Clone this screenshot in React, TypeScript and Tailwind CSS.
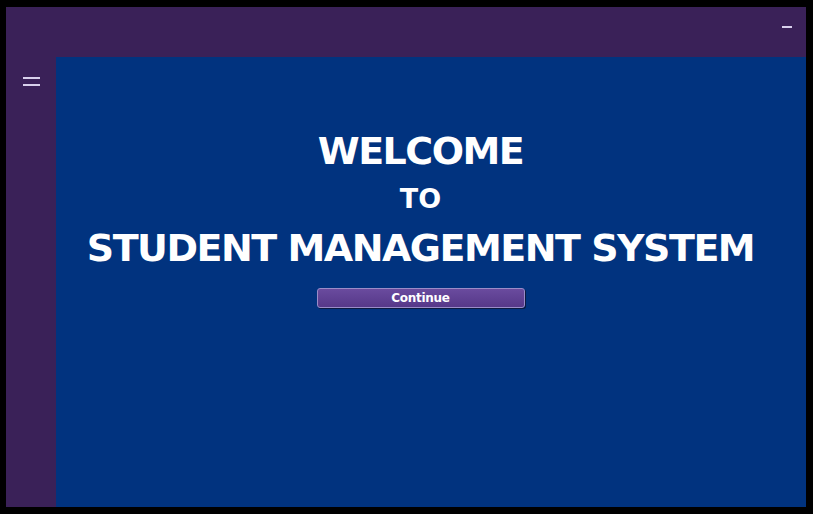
const App = () => {
  return (
    <div className="w-[813px] h-[514px] bg-black pt-[7px] pl-[6px] pr-[7px] pb-[7px] font-['DejaVu_Sans',sans-serif]">
      <div className="flex flex-col w-full h-full bg-[#3a2158]">
        {/* Title bar */}
        <div className="flex h-[50px] justify-end shrink-0">
          <button className="mt-[19px] mr-[14px] w-[10px] h-[2px] bg-[#d8d0ec]" />
        </div>
        <div className="flex flex-1">
          {/* Sidebar */}
          <div className="w-[50px] shrink-0 flex flex-col items-start pl-[17px] pt-[20px] gap-[5px]">
            <span className="block w-[17px] h-[2px] bg-[#d8d0ec]" />
            <span className="block w-[17px] h-[2px] bg-[#d8d0ec]" />
          </div>
          {/* Main */}
          <main className="flex-1 bg-[#01337f] flex flex-col items-center pr-[21px] pt-[70px] text-white whitespace-nowrap">
            <h1 className="text-[38px] leading-[48px] font-bold tracking-[-1.5px]">WELCOME</h1>
            <h2 className="mt-[6px] text-[27px] leading-[36px] font-bold">TO</h2>
            <h1 className="mt-[7px] text-[38px] leading-[48px] font-bold tracking-[-1.5px]">
              STUDENT MANAGEMENT SYSTEM
            </h1>
            <button className="mt-[16px] w-[208px] h-[20px] rounded-[3px] border border-[#9a8cc8] bg-gradient-to-b from-[#6a4b9e] to-[#563889] shadow-[1px_1px_0_#0b1a40] text-[12px] leading-[17px] font-bold text-white tracking-[-0.3px]">
              Continue
            </button>
          </main>
        </div>
      </div>
    </div>
  );
};

export default App;
